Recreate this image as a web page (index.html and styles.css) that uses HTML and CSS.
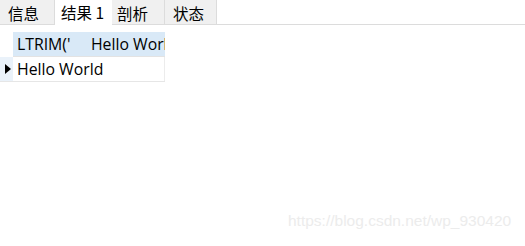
FILE: index.html
```html
<!DOCTYPE html>
<html>
<head>
<meta charset="utf-8">
<link rel="stylesheet" href="styles.css">
</head>
<body>
<div class="tabs">
  <div class="tab">信息</div>
  <div class="tab active">结果 1</div>
  <div class="tab">剖析</div>
  <div class="tab">状态</div>
  <div class="tab-fill"></div>
</div>
<div class="grid">
  <div class="row head">
    <div class="rh"></div>
    <div class="cell">LTRIM('     Hello World')</div>
  </div>
  <div class="row data">
    <div class="rh"><span class="arrow"></span></div>
    <div class="cell">Hello World</div>
  </div>
</div>
<div class="watermark">https://blog.csdn.net/wp_930420</div>
</body>
</html>
```
FILE: styles.css
```css
html, body {
  margin: 0;
  padding: 0;
  background: #fff;
  width: 525px;
  height: 246px;
  overflow: hidden;
  position: relative;
  font-family: "Noto Sans CJK SC", "Noto Sans", sans-serif;
}
.tabs {
  display: flex;
  height: 25px;
}
.tab {
  box-sizing: border-box;
  height: 25px;
  background: #f0f0f0;
  border-right: 1px solid #dcdcdc;
  border-bottom: 1px solid #dcdcdc;
  font-size: 15.5px;
  line-height: 27px;
  color: #000;
  padding-left: 8px;
  width: 55px;
  white-space: nowrap;
}
.tab:nth-child(2) { width: 57px; }
.tab:nth-child(3) { width: 53px; padding-left: 5px; }
.tab:nth-child(4) { width: 52px; }
.tab.active {
  background: #fff;
  border-bottom-color: #fff;
  border-right-color: #fff;
  padding-left: 6px;
  line-height: 24px;
}
.tab-fill {
  flex: 1;
  border-bottom: 1px solid #dcdcdc;
}
.grid {
  margin-top: 7px;
  width: 165px;
}
.row {
  display: flex;
  height: 25px;
  box-sizing: border-box;
}
.rh {
  width: 13px;
  display: flex;
  align-items: center;
}
.head .cell {
  background: #d9e9f7;
  border-bottom: 1px solid #e3e3e3;
}
.data {
  border-bottom: 1px solid #e6e6e6;
}
.data .rh {
  background: #eaf2fa;
}
.data .cell {
  border-right: 1px solid #ececec;
}
.cell {
  width: 152px;
  box-sizing: border-box;
  padding-left: 4px;
  white-space: pre;
  overflow: hidden;
  font-family: "Open Sans", "Noto Sans", sans-serif;
  font-size: 15.8px;
  line-height: 25px;
  color: #000;
}
.arrow {
  display: block;
  margin-left: 5px;
  width: 0;
  height: 0;
  border-top: 5px solid transparent;
  border-bottom: 5px solid transparent;
  border-left: 6px solid #000;
}
.watermark {
  position: absolute;
  left: 288px;
  top: 212px;
  font-family: "Liberation Sans", Arial, sans-serif;
  font-size: 15.5px;
  color: #ececec;
}
```
